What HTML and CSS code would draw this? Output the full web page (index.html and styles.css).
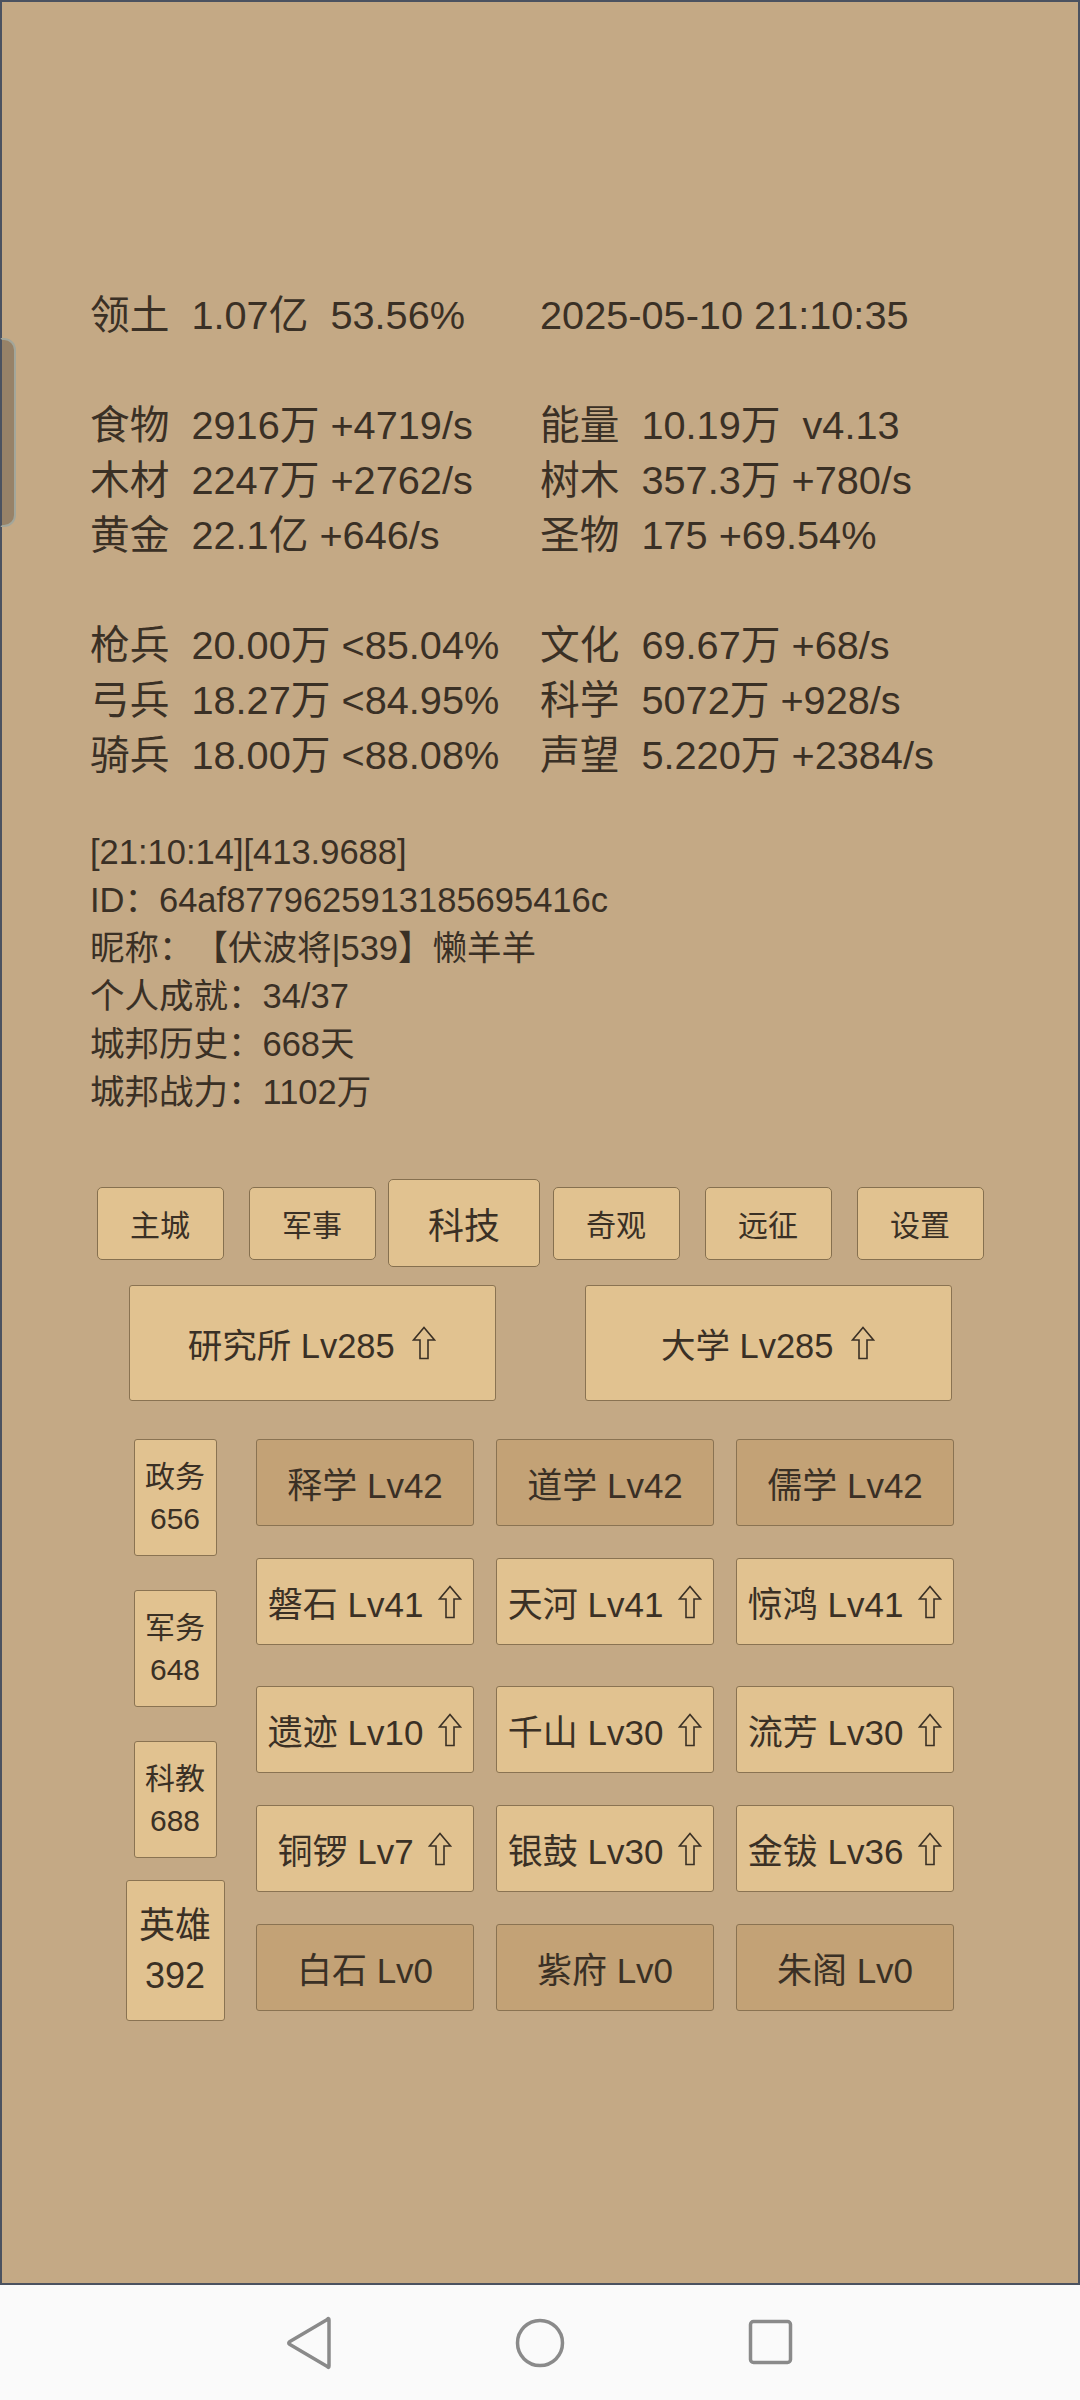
FILE: index.html
```html
<!DOCTYPE html>
<html lang="zh">
<head>
<meta charset="utf-8">
<title>城邦</title>
<link rel="stylesheet" href="styles.css">
</head>
<body>
<div class="screen">
  <div class="app">
    <div class="handle"></div>

    <div class="stats">
      <div class="line">领土  1.07亿  53.56%</div>
      <div class="line">2025-05-10 21:10:35</div>
      <div class="line"></div>
      <div class="line"></div>
      <div class="line">食物  2916万 +4719/s</div>
      <div class="line">能量  10.19万  v4.13</div>
      <div class="line">木材  2247万 +2762/s</div>
      <div class="line">树木  357.3万 +780/s</div>
      <div class="line">黄金  22.1亿 +646/s</div>
      <div class="line">圣物  175 +69.54%</div>
      <div class="line"></div>
      <div class="line"></div>
      <div class="line">枪兵  20.00万 &lt;85.04%</div>
      <div class="line">文化  69.67万 +68/s</div>
      <div class="line">弓兵  18.27万 &lt;84.95%</div>
      <div class="line">科学  5072万 +928/s</div>
      <div class="line">骑兵  18.00万 &lt;88.08%</div>
      <div class="line">声望  5.220万 +2384/s</div>
    </div>

    <div class="info">
      <div class="iline">[21:10:14][413.9688]</div>
      <div class="iline">ID：64af8779625913185695416c</div>
      <div class="iline">昵称：【伏波将|539】懒羊羊</div>
      <div class="iline">个人成就：34/37</div>
      <div class="iline">城邦历史：668天</div>
      <div class="iline">城邦战力：1102万</div>
    </div>

    <nav class="tabs">
      <div class="slot"><div class="tab">主城</div></div>
      <div class="slot"><div class="tab">军事</div></div>
      <div class="slot"><div class="tab active">科技</div></div>
      <div class="slot"><div class="tab">奇观</div></div>
      <div class="slot"><div class="tab">远征</div></div>
      <div class="slot"><div class="tab">设置</div></div>
    </nav>

    <div class="bigrow">
      <div class="half"><div class="big">研究所 Lv285 <svg class="up" viewBox="0 0 24 34"><path d="M12 1.5 L22.5 14 L16 14 L16 32.5 L8 32.5 L8 14 L1.5 14 Z"/></svg></div></div>
      <div class="half"><div class="big">大学 Lv285 <svg class="up" viewBox="0 0 24 34"><path d="M12 1.5 L22.5 14 L16 14 L16 32.5 L8 32.5 L8 14 L1.5 14 Z"/></svg></div></div>
    </div>

    <div class="main">
      <div class="side">
        <div class="sslot"><div class="sbtn">政务<br>656</div></div>
        <div class="sslot"><div class="sbtn">军务<br>648</div></div>
        <div class="sslot"><div class="sbtn">科教<br>688</div></div>
        <div class="sslot"><div class="sbtn hero">英雄<br>392</div></div>
      </div>
      <div class="rows">
        <div class="row">
          <div class="cell dark">释学 Lv42</div>
          <div class="cell dark">道学 Lv42</div>
          <div class="cell dark">儒学 Lv42</div>
        </div>
        <div class="row">
          <div class="cell">磐石 Lv41 <svg class="up" viewBox="0 0 24 34"><path d="M12 1.5 L22.5 14 L16 14 L16 32.5 L8 32.5 L8 14 L1.5 14 Z"/></svg></div>
          <div class="cell">天河 Lv41 <svg class="up" viewBox="0 0 24 34"><path d="M12 1.5 L22.5 14 L16 14 L16 32.5 L8 32.5 L8 14 L1.5 14 Z"/></svg></div>
          <div class="cell">惊鸿 Lv41 <svg class="up" viewBox="0 0 24 34"><path d="M12 1.5 L22.5 14 L16 14 L16 32.5 L8 32.5 L8 14 L1.5 14 Z"/></svg></div>
        </div>
        <div class="row spaced">
          <div class="cell">遗迹 Lv10 <svg class="up" viewBox="0 0 24 34"><path d="M12 1.5 L22.5 14 L16 14 L16 32.5 L8 32.5 L8 14 L1.5 14 Z"/></svg></div>
          <div class="cell">千山 Lv30 <svg class="up" viewBox="0 0 24 34"><path d="M12 1.5 L22.5 14 L16 14 L16 32.5 L8 32.5 L8 14 L1.5 14 Z"/></svg></div>
          <div class="cell">流芳 Lv30 <svg class="up" viewBox="0 0 24 34"><path d="M12 1.5 L22.5 14 L16 14 L16 32.5 L8 32.5 L8 14 L1.5 14 Z"/></svg></div>
        </div>
        <div class="row">
          <div class="cell">铜锣 Lv7 <svg class="up" viewBox="0 0 24 34"><path d="M12 1.5 L22.5 14 L16 14 L16 32.5 L8 32.5 L8 14 L1.5 14 Z"/></svg></div>
          <div class="cell">银鼓 Lv30 <svg class="up" viewBox="0 0 24 34"><path d="M12 1.5 L22.5 14 L16 14 L16 32.5 L8 32.5 L8 14 L1.5 14 Z"/></svg></div>
          <div class="cell">金钹 Lv36 <svg class="up" viewBox="0 0 24 34"><path d="M12 1.5 L22.5 14 L16 14 L16 32.5 L8 32.5 L8 14 L1.5 14 Z"/></svg></div>
        </div>
        <div class="row">
          <div class="cell dark">白石 Lv0</div>
          <div class="cell dark">紫府 Lv0</div>
          <div class="cell dark">朱阁 Lv0</div>
        </div>
      </div>
    </div>
  </div>

  <div class="navbar">
    <div class="nslot">
      <svg width="50" height="56" viewBox="0 0 50 56"><path d="M45 5 L45 51 Q45 53.5 43.3 51.6 L5.5 29.3 Q4 28 5.5 26.7 L43.3 4.4 Q45 2.5 45 5 Z" fill="none" stroke="#8a8a8a" stroke-width="3.5" stroke-linejoin="round"/></svg>
    </div>
    <div class="nslot">
      <svg width="52" height="56" viewBox="0 0 52 56"><circle cx="26" cy="28" r="22.5" fill="none" stroke="#8a8a8a" stroke-width="3.5"/></svg>
    </div>
    <div class="nslot">
      <svg width="50" height="56" viewBox="0 0 50 56"><rect x="4.5" y="6.5" width="40" height="41" rx="3" fill="none" stroke="#8a8a8a" stroke-width="3.5"/></svg>
    </div>
  </div>
</div>
</body>
</html>
```

FILE: styles.css
```css
* { box-sizing: border-box; }
html, body { margin: 0; padding: 0; }
body {
  width: 1080px;
  height: 2400px;
  overflow: hidden;
  font-family: "Liberation Sans", "Noto Sans CJK SC", sans-serif;
  color: #3a3025;
  background: #fafafa;
  text-spacing-trim: space-all;
}
.screen { width: 1080px; height: 2400px; display: flex; flex-direction: column; }
.app {
  position: relative;
  height: 2285px;
  background: #c4a985;
  border: 2px solid #4b5260;
}
.handle {
  position: absolute;
  left: -2px;
  top: 336px;
  width: 16px;
  height: 189px;
  background: #978268;
  border: 2px solid #a3a69a;
  border-left: 2px solid #4b5260;
  border-radius: 0 12px 12px 0;
}
.stats {
  margin-top: 286px;
  padding-left: 88px;
  display: grid;
  grid-template-columns: 450px 1fr;
  font-size: 39.7px;
}
.line { height: 55px; line-height: 55px; white-space: pre; }
.info {
  margin-top: 45px;
  padding-left: 88px;
  font-size: 34.5px;
}
.iline { height: 48px; line-height: 48px; white-space: pre; }
.tabs {
  margin-top: 63px;
  height: 88px;
  display: flex;
  justify-content: center;
  align-items: center;
}
.slot { width: 152px; display: flex; justify-content: center; align-items: center; }
.tab {
  width: 127px;
  height: 73px;
  background: #e1c290;
  border: 1.5px solid #86704f;
  border-radius: 5px;
  display: flex;
  align-items: center;
  justify-content: center;
  font-size: 30px;
}
.tab.active { width: 152px; height: 88px; font-size: 36px; }
.bigrow {
  margin: 18px auto 0;
  width: 912px;
  display: flex;
}
.half { flex: 1; display: flex; justify-content: center; }
.big {
  width: 367px;
  height: 116px;
  background: #e1c290;
  border: 1.5px solid #8a7352;
  border-radius: 3px;
  display: flex;
  align-items: center;
  justify-content: center;
  font-size: 34.5px;
  white-space: pre;
}
.up {
  width: 24px;
  height: 34px;
  margin-left: 8px;
  fill: none;
  stroke: #3a3025;
  stroke-width: 1.6;
  stroke-linejoin: miter;
}
.main {
  margin-top: 21px;
  padding-left: 123px;
  display: flex;
  gap: 31px;
}
.side { width: 100px; display: flex; flex-direction: column; }
.sslot { height: 151px; display: flex; align-items: center; justify-content: center; }
.sbtn {
  width: 83px;
  height: 117px;
  background: #e1c290;
  border: 1.5px solid #8a7352;
  border-radius: 3px;
  display: flex;
  align-items: center;
  justify-content: center;
  text-align: center;
  font-size: 30px;
  line-height: 42px;
}
.sbtn.hero { width: 99px; height: 141px; font-size: 36px; line-height: 50px; }
.rows { padding-top: 17px; display: flex; flex-direction: column; gap: 32px; }
.row { display: grid; grid-template-columns: repeat(3, 218px); column-gap: 22px; }
.row.spaced { margin-top: 9px; }
.cell {
  height: 87px;
  background: #e1c290;
  border: 1.5px solid #8a7352;
  border-radius: 3px;
  display: flex;
  align-items: center;
  justify-content: center;
  font-size: 35px;
  white-space: pre;
}
.cell .up { margin-left: 5px; }
.cell.dark { background: #c3a276; }
.navbar {
  flex: 1;
  display: flex;
  justify-content: center;
  align-items: center;
  background: #fafafa;
}
.nslot { width: 231px; display: flex; justify-content: center; align-items: center; }
```
